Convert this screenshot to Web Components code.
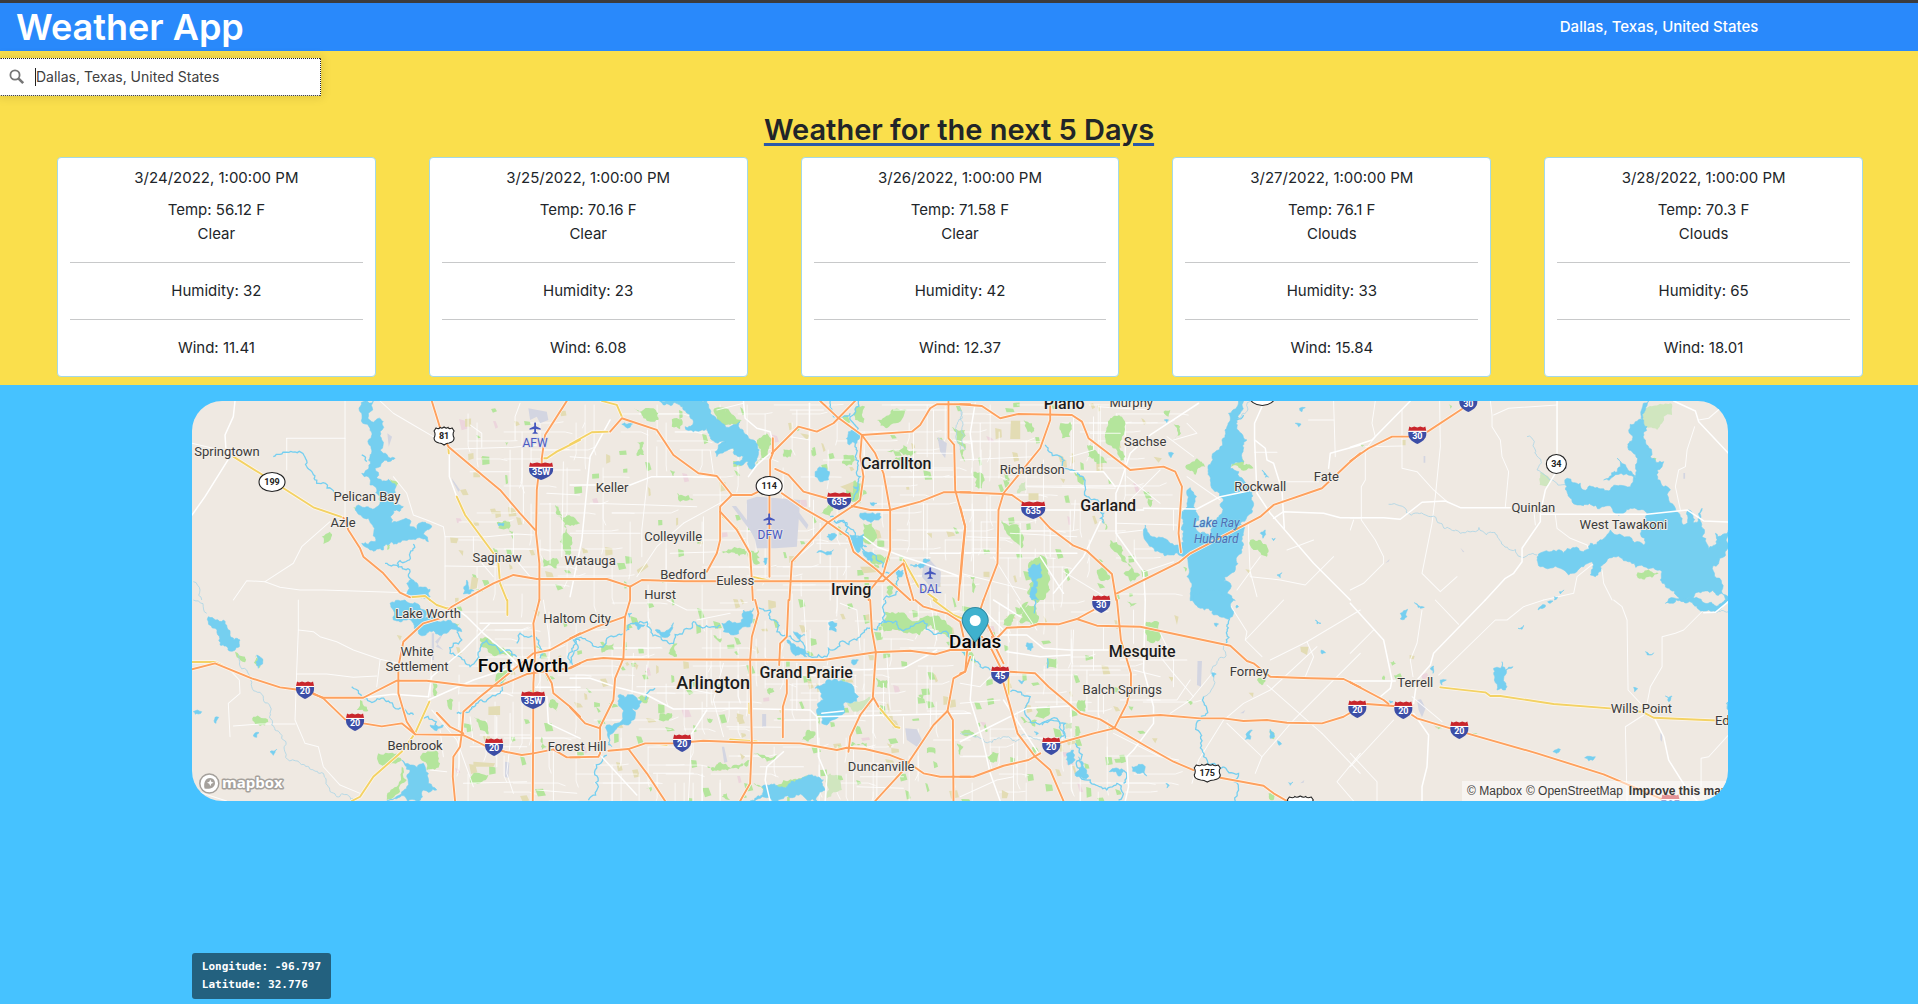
<!DOCTYPE html>
<html lang="en">
<head>
<meta charset="utf-8">
<meta name="viewport" content="width=device-width, initial-scale=1">
<title>Weather App</title>
<style>
  html, body { margin: 0; }
  body { font: 400 16px/24px Inter, "Liberation Sans", sans-serif; color: #212529; background: #46c2ff; }
</style>
</head>
<body>
<weather-app>
  <app-header slot="header" place="Dallas, Texas, United States">Weather App</app-header>
  <place-search slot="search" value="Dallas, Texas, United States"></place-search>
  <span slot="title">Weather for the next 5 Days</span>
  <forecast-card when="3/24/2022, 1:00:00 PM" temp="56.12" sky="Clear" humidity="32" wind="11.41"></forecast-card>
  <forecast-card when="3/25/2022, 1:00:00 PM" temp="70.16" sky="Clear" humidity="23" wind="6.08"></forecast-card>
  <forecast-card when="3/26/2022, 1:00:00 PM" temp="71.58" sky="Clear" humidity="42" wind="12.37"></forecast-card>
  <forecast-card when="3/27/2022, 1:00:00 PM" temp="76.1" sky="Clouds" humidity="33" wind="15.84"></forecast-card>
  <forecast-card when="3/28/2022, 1:00:00 PM" temp="70.3" sky="Clouds" humidity="65" wind="18.01"></forecast-card>
  <city-map slot="map"></city-map>
  <coord-readout slot="coords" longitude="-96.797" latitude="32.776"></coord-readout>
</weather-app>

<script>
function define(name, render) {
  customElements.define(name, class extends HTMLElement {
    connectedCallback() {
      if (this.shadowRoot) return;
      this.attachShadow({ mode: "open" }).innerHTML = render(this);
    }
  });
}

define("weather-app", () => `
<style>
  :host { display: flex; flex-direction: column; min-height: 100vh; box-sizing: border-box; border-top: 3px solid #3b3b3d; }
  .forecast { background: #fadf4c; padding: 7px 0 8px; }
  h2 { margin: 15px 0 8px; font-size: 29px; line-height: 38px; font-weight: 600; text-align: center;
       text-decoration: underline 3px #2a59a8; text-underline-offset: 3px; }
  .days { display: grid; grid-template-columns: repeat(5, 1fr); gap: 53px; padding: 0 55px 0 57px; }
  .map { width: calc(80% + 2px); margin: 16px 0 0 10%; }
  .coords { margin: auto 0 5px 10%; padding-top: 16px; }
</style>
<slot name="header"></slot>
<main class="forecast">
  <slot name="search"></slot>
  <h2><slot name="title"></slot></h2>
  <div class="days"><slot></slot></div>
</main>
<div class="map"><slot name="map"></slot></div>
<div class="coords"><slot name="coords"></slot></div>`);

define("app-header", el => `
<style>
  :host { display: grid; grid-template-columns: 73fr 27fr; align-items: center; background: #2989fb; color: #fff; }
  h1 { margin: 0; padding-left: 16px; font-size: 36px; line-height: 48px; font-weight: 600; }
  p { margin: 0; text-align: center; font-size: 15px; font-weight: 500; }
</style>
<h1><slot></slot></h1><p>${el.getAttribute("place")}</p>`);

define("place-search", el => `
<style>
  :host { display: block; width: 321px; }
  form { display: flex; align-items: center; height: 38px; box-sizing: border-box; padding-left: 9px;
         background: #fff; border: 1px dotted #222; border-left: 0; border-radius: 1px;
         box-shadow: 0 0 10px 2px rgba(0,0,0,.1); }
  svg { width: 16px; height: 16px; flex: none; margin-right: 10px; }
  i { width: 1px; height: 18px; background: #222; flex: none; }
  input { flex: 1; min-width: 0; border: 0; outline: 0; padding: 0; background: none; color: #404040;
          font: 400 14px/20px Inter, "Liberation Sans", sans-serif; }
</style>
<form>
  <svg viewBox="0 0 16 16" fill="none" stroke="#757575" aria-hidden="true"><ellipse cx="6" cy="6" rx="4.6" ry="4.7" stroke-width="1.8"/><path d="M9.6 9.6l4.6 4.6" stroke-width="2.6"/></svg>
  <i></i><input type="text" aria-label="Search" value="${el.getAttribute("value")}">
</form>`);

define("forecast-card", el => {
  const a = n => el.getAttribute(n);
  return `
<style>
  :host { display: block; box-sizing: border-box; padding: 8px 12px 0; background: #fff; border: 1px solid #a3d9e8;
          border-radius: 4px; text-align: center; font-size: 15px; line-height: 24px; }
  h3 { margin: 0 0 8px; font: inherit; }
  p { margin: 0 0 16px; }
  hr { height: 1px; margin: 16px 0; border: 0; background: #c8c9ca; }
</style>
<h3>${a("when")}</h3>
<p>Temp: ${a("temp")} F<br>${a("sky")}</p><hr>
<p>Humidity: ${a("humidity")}</p><hr>
<p>Wind: ${a("wind")}</p>`;
});

define("coord-readout", el => `
<style>
  :host { display: inline-block; vertical-align: top; padding: 5px 10px; border-radius: 3px; background: #23617f; color: #fff;
          font: 700 11px/18px "DejaVu Sans Mono", monospace; }
</style>
<div>Longitude: ${el.getAttribute("longitude")}</div>
<div>Latitude: ${el.getAttribute("latitude")}</div>`);

/* Map data: one sheet per rectangle, three units to a pixel, origin at (x, y). */
const SHEETS = [
{ x: 180, y: 390,
  water: `555,33 580,33 578,60 565,70 575,95 610,95 600,125 605,150 600,180 645,205 610,215 585,235 590,262 625,268 648,290 635,320 650,345 670,350 640,362 635,400 665,390 690,390 690,410 710,420 722,398 755,408 730,432 745,455 700,448 650,462 618,462 610,480 570,480 545,460 585,455 582,420 565,385 530,365 535,345 560,350 595,348 600,320 585,290 570,285 565,260 545,250 560,240 570,200 575,180 565,160 570,115 548,100 545,70
680,580 700,570 715,592 750,598 750,620 680,610
860,570 866,600 882,602 850,612
955,400 972,400 970,408 955,407`,
  river: `280,200 320,187 345,186 380,212 398,250 410,280 455,298 475,310
700,462 690,500 660,512 655,530 615,520
655,530 690,545 700,575
545,195 560,215`,
  stream: `40,575 60,600 65,630`,
  green: `425,440 450,425 445,455 430,462
630,268 655,280 640,310 632,300
950,397 990,397 988,415 955,415
975,157 985,157 980,167
520,352 540,352 530,364
618,462 630,465 622,480
1125,345 1145,380 1180,395 1150,480 1170,500 1160,420
1090,500 1130,505 1130,535 1090,530
980,410 1000,440 1000,450
1130,380 1200,400 1180,380`,
  tan: `810,442 835,445 830,460 812,458
875,560 895,565 890,595 870,600
880,246 900,248 900,262 880,262
835,480 850,482 848,498`,
  apt: `1045,55 1100,65 1105,90 1080,100 1070,80 1050,90
815,265 840,300 835,305 818,275
622,130 636,140 626,170`,
  yellow: `160,200 240,250 400,352 490,383
805,175 806,190
830,320 855,375 940,490 955,520 960,580 980,630
1085,205 1100,205 1130,185 1200,150
690,622 735,618 750,630`,
  orange: `755,33 785,130 805,170 870,225 960,300 1020,370 1065,420
1160,33 1095,135 1085,205 1085,225
1075,260 1070,300 1068,430 1078,520 1078,630
490,383 505,420 540,475 550,500 610,550 660,608 690,622
850,630 940,580 1000,555 1070,567 1200,567`,
  white: `165,33 160,80 135,135 138,180 150,200 75,320 36,375
808,180 808,260 830,320`,
  minor: `36,160 130,182
495,33 495,383
320,145 495,145
320,145 320,240
600,33 640,70 700,105 785,155
450,395 365,470 340,520 255,575 200,572 160,630
255,575 300,592 360,600 430,600 680,608
640,260 680,310 700,375 740,390 790,410 795,440 795,630
808,178 1000,172 1070,165
1020,40 1005,80 1005,150
990,180 990,370
870,105 905,130 905,172
870,245 990,245
795,440 920,440 1010,432 1060,435
1030,290 1030,400
1090,240 1200,240
1100,310 1200,315
1080,480 1200,480
1110,340 1110,520
1150,215 1145,500
880,440 880,490 940,560
795,528 950,530
1000,430 1000,500 1050,560` },
{ x: 180, y: 600,
  water: `85,50 130,60 150,105 180,120 178,140 120,135 105,85 85,65
230,165 248,185 235,205
630,10 680,5 720,25 740,35 735,55 775,65 830,75 845,95 800,100 760,92 720,105 715,95 700,70 680,60 640,60 640,30
665,480 690,495 730,490 745,520 745,550 770,570 730,570 710,603 620,603 665,575 680,560 680,530 690,510
40,335 65,335 55,342
105,352 116,352 108,370
220,408 237,398 230,412
270,455 290,448 280,466
750,375 790,375 770,392`,
  river: `830,95 845,120 820,130 810,160 840,170 870,200 890,180 900,145 920,120 950,140 960,160 1010,170
1010,130 1020,100 1060,110 1080,140 1080,175
960,240 960,280 900,300 870,330 830,340
515,260 560,295 640,320 700,345
730,355 770,380
1180,200 1190,150 1180,120 1200,122`,
  stream: `40,0 80,40
175,165 200,210 215,260 270,340 275,375 300,400 360,490 430,520 445,560 470,590 530,600`,
  green: `165,155 195,170 195,187 170,172
225,165 250,180 238,205
220,350 265,365 240,378 225,372
540,300 560,320 565,332 530,330
595,460 625,460 665,480 640,490 597,492
665,500 680,540 660,575 620,600 650,560
720,470 770,450 780,490 740,510
900,115 1000,160 1000,175 930,160 900,140
950,200 985,210 970,255 945,240
800,300 820,300 815,330
760,240 772,245 770,290 760,285
790,60 840,70 830,80
880,350 900,360 925,405 900,390
880,520 925,525 900,550 870,550
1085,410 1100,440 1085,450
1060,130 1080,150 1082,170
1110,300 1135,310 1130,335 1112,325`,
  tan: `925,320 960,318 960,345 925,345
880,485 945,490 940,500 880,500
650,105 665,108 660,122
1060,30 1080,35 1075,50`,
  apt: `755,100 762,100 762,180 755,180
765,125 790,100 768,140 790,150
975,485 988,487 985,535 975,530`,
  yellow: `36,186 105,186 125,195
750,0 770,15 800,25 820,25
748,305 705,400 665,455 580,530 540,590 515,603
982,0 982,45`,
  orange: `36,208 105,190 215,235 300,262 360,270
400,282 430,293 550,293 650,242 740,242 860,257 960,257 1040,222 1085,215 1170,205 1200,190
400,280 430,295 495,358 550,370 605,379 665,370 705,403 850,405 915,437 975,455 1025,465 1060,460 1120,448 1160,472 1200,472
850,0 815,20 780,55 730,70 670,125 655,200 655,280 680,365 705,403
1078,0 1060,70 1065,160 1060,250 1058,603
1200,100 1110,150 1060,160 950,250 900,290 850,335 845,400 840,440 820,470 818,530 825,603
1090,205 1115,250 1120,280 1170,320 1200,350
770,338 810,380 850,400`,
  white: `550,293 640,283 745,290
745,300 880,240 1000,200
930,70 850,150 755,230 745,290
820,20 860,50 910,100 970,150 1010,190
900,70 1060,70
1060,262 1200,262
1100,290 1105,370 1200,415`,
  minor: `355,0 355,90 350,210 345,360 375,430 415,440 430,500 480,555 540,580
355,90 400,95 420,110 470,125 520,150 600,178 655,190
350,222 440,222 520,232 590,228
590,260 600,180
140,200 178,240 180,280 145,310 150,410
160,378 240,372 345,372
750,290 755,170
990,340 990,430 980,520 1000,580
950,350 950,500
870,440 1040,440
850,550 1040,545
1090,0 1110,130 1105,200
1120,450 1120,600
1070,570 1190,580
870,350 880,430
900,405 1050,405
755,330 830,420 880,560
750,510 800,515
36,570 140,603
780,390 790,470` },
{ x: 570, y: 390,
  water: `268,33 410,33 425,75 445,90 455,100 510,95 520,125 550,150 562,170 560,210 545,238 535,215 490,220 520,200 490,175 440,200 435,185 465,155 425,150 410,115 370,125 345,110 370,95 340,60 280,45
735,245 755,233 778,245 775,270 750,275 735,260
835,125 870,130 860,160 848,155 838,165
1020,525 1060,508 1080,510 1050,535
155,103 190,100 180,112
870,370 930,370 925,390 880,390
900,338 920,340 910,348
840,435 880,432 890,470 860,490 845,460
880,480 910,490 905,515 885,500
980,540 1000,540 995,560 980,555
770,440 800,435 790,448
740,488 790,480 770,495
582,505 592,505 585,525
850,290 865,290 860,310`,
  river: `865,33 840,80 860,130 855,200 870,260 850,330
780,33 790,80 840,70
780,380 850,440 880,490 940,520 990,550 940,630
800,400 850,420 850,460`,
  stream: `1165,50 1170,180`,
  green: `560,150 590,130 605,150 590,200 560,225
880,400 905,400 905,460 885,460
545,490 565,480 570,520 550,520
640,178 662,178 662,200 640,200
190,55 250,55 265,90 220,85
305,88 335,88 330,118 305,110
430,60 490,75 515,90 480,105 450,100
490,175 520,185 500,195
200,155 220,155 222,195 200,198
300,240 315,245 310,260
320,310 355,315 370,330 330,335
820,195 850,195 845,225 815,220
855,270 880,280 870,340 840,330
775,345 785,345 780,378 750,370
970,210 1010,200 1010,240 980,235
950,185 1000,165 1040,185 1000,195
920,90 1010,60 1000,80 950,115
1145,110 1185,120 1185,180 1170,165
455,485 530,485 525,495 460,490
855,50 885,50 880,100 855,90
900,490 960,500 950,520 900,515
950,590 990,550 960,620`,
  tan: `810,290 850,275 848,310
870,530 920,530 930,545 880,550
690,130 720,135 710,150
1070,430 1085,430 1085,445
200,540 230,520 235,530 205,552`,
  apt: `530,330 560,320 690,330 680,470 615,475 560,475 555,450 530,400
485,348 498,348 560,430 550,435
640,330 655,325 715,405 710,418
1060,520 1075,505 1112,545 1110,590 1080,590 1055,560
1102,140 1130,160 1125,205 1110,185`,
  yellow: `95,33 140,45 155,80
0,163 65,127 120,125
452,375 500,415 538,490 545,560 600,572
1000,510 1045,590 1100,630`,
  orange: `120,125 155,85 260,120 310,195 385,250 440,258 485,315 545,315 575,300
485,315 450,350 450,450 440,490 410,545
450,365 500,420 540,490 545,570 548,630
608,145 608,190 600,210 600,260
598,310 598,560
605,190 685,110 740,125 790,100 855,33
750,33 800,80 875,135 1025,125 1050,105 1080,55 1100,43 1200,43
875,135 915,190 940,250 960,360 960,480 940,550 900,600 895,630
875,135 870,200 880,260 870,330 845,350
615,237 655,255 700,305 770,325
845,348 900,360 960,360 1050,335 1120,307 1200,307
845,350 770,400 665,515 658,630
635,310 700,355 770,395 835,440 850,485 920,540 1020,630
0,567 110,567 180,590 215,570 340,574 940,574
180,590 180,630
940,572 1000,520 1010,560 1030,630
1135,33 1135,145 1152,165 1155,300 1185,410 1175,500 1165,630`,
  white: `520,33 525,85 560,115 600,125 605,145
535,260 560,225 600,190
0,285 180,285 245,260 350,260 440,262
120,90 60,200 35,450 0,620
718,40 718,350
880,440 920,470 1000,500 1060,520 1170,560
1080,490 1200,490`,
  minor: `232,120 232,270 215,420 215,500
340,400 485,320
200,560 260,470 340,400
0,200 60,205
60,340 240,345 380,350
0,430 210,430
330,180 420,180 430,250
440,60 520,40
660,60 760,60
680,60 680,110
760,210 840,210
970,60 1130,60
1030,130 1030,320
1040,190 1150,190
980,420 1180,420
1060,340 1060,480
730,330 730,460 660,520
740,460 840,460
750,400 750,520
400,380 400,520
300,490 450,485
260,170 260,260
880,240 1150,240
1090,60 1090,330
1150,150 1200,160
660,140 720,150
620,530 840,530
780,500 780,630
560,600 900,600` },
{ x: 570, y: 600,
  water: `540,603 570,590 575,560 650,560 720,525 760,540 765,570 740,603
735,265 770,240 820,245 865,290 820,310 815,345 770,375 755,370 760,300 750,275
145,285 215,305 185,325 195,350 170,375 135,390 125,440 115,435 110,375 140,370 150,320
455,70 500,70 520,30 550,25 540,80 490,105 460,95
255,90 310,68 300,105 270,105
650,120 690,145 710,170 685,165
670,95 705,105 690,120
775,68 800,70 798,95 778,90
845,180 865,180 850,195
170,40 185,40 178,52
195,70 225,75 205,90`,
  river: `0,190 15,120 60,125 90,140 130,110 165,95 175,75 240,85 310,130 340,95 370,65 450,75
560,20 600,30 620,95 670,120 720,170 770,170 775,145 810,125 860,120 920,90 940,30 945,0
110,465 75,510 85,560 55,600
225,300 240,270 255,265
940,60 1060,62 1140,115`,
  green: `550,550 640,540 720,525 700,545 640,565 580,570
945,35 960,40 1080,50 1145,95 1150,115 1080,75 930,75
915,235 950,240 950,265 920,260
295,160 305,140 322,130 320,170
740,345 760,340 750,375
710,390 735,395 715,425 695,420
90,140 130,130 130,150 95,158
200,295 235,290 230,310
270,340 305,340 295,362 265,360
410,500 490,505 540,480 530,500 450,512
550,460 600,475 625,460 590,485
430,105 455,115 450,128
845,425 890,430 890,440 840,438
1070,445 1095,445 1095,462 1070,460
225,560 245,562 240,575
410,355 428,358 420,370
1160,430 1180,440 1170,465
590,270 610,265 600,285
470,580 455,590 480,600
1045,285 1060,285 1055,300`,
  lgreen: `780,520 810,540 815,570 770,595 765,545
830,310 900,290 900,320 850,335`,
  tan: `500,340 520,345 515,370 502,365
950,430 965,435 960,445
190,190 205,195 200,210
510,460 525,470 515,480`,
  apt: `1005,385 1040,388 1060,430 1040,440 1010,420
750,255 800,240 790,270 760,270
576,342 588,342 588,380 576,380
455,440 462,440 472,485 462,488`,
  yellow: `925,320 975,380 988,383
1090,0 1150,45 1175,55
538,310 538,340
245,430 290,434
480,418 560,424`,
  orange: `180,0 165,50 80,80 0,115
165,50 160,175 135,235 130,300 90,380 90,460 85,470 0,472
0,322 45,370 90,385
0,203 50,180 100,174 160,178 760,180 915,157 1020,152 1095,163 1140,150 1200,150
555,0 565,40 545,110 540,180 545,430 540,550 510,603
655,0 650,110 630,130 627,195
650,240 650,280 638,320 638,412
900,0 905,90 917,157 908,290 925,320
908,295 870,345 840,410 835,455
115,452 175,447 225,430 310,430 400,422 545,428 690,430 800,450 830,443 885,447 960,465 1010,485 1060,520 1110,530 1200,530
175,447 230,520 285,603
915,603 1000,510 1090,375 1132,333 1150,235 1185,215 1200,170
1132,333 1148,360 1150,603
1035,0 1060,20 1130,40 1170,65 1180,110`,
  white: `0,235 60,235 140,262 230,285 310,327 500,325 720,330 740,350 1200,340
95,470 200,585
365,400 410,330
740,350 745,470 770,530 765,603
600,603 585,540 590,500 640,455
755,340 820,333
850,210 1000,205 1100,150`,
  minor: `410,60 410,320
190,160 185,300
460,190 430,300 460,410
200,260 320,260 420,280
365,400 355,600
850,450 850,600
850,490 1000,490
660,300 740,300
680,190 680,330
230,195 225,280
0,270 130,270
470,380 640,382
940,250 940,350
1000,350 1000,430
1040,210 1040,340
1085,200 1080,380
870,530 1000,530
860,560 1000,565
920,490 920,600
250,520 370,520
450,540 450,600
570,500 700,500
760,200 900,210
1090,420 1200,420
290,0 350,30 520,30
380,60 480,40
700,0 710,150
810,10 860,30 870,150
950,165 960,330
1080,0 1100,120` },
{ x: 960, y: 390,
  water: `835,33 850,33 835,75 830,110 860,150 845,190 850,215 810,235 850,270 865,300 880,340 860,380 840,400 845,440 850,465 830,500 825,540 790,575 810,580 800,610 825,632 690,632 690,575 680,560 685,530 670,500 630,495 575,470 550,425 555,405 590,445 630,460 655,465 675,460 670,400 680,340 690,293 700,350 710,370 705,410 720,430 760,450 760,400 785,370 790,330 760,300 750,270 755,200 785,150 800,110 805,70
625,188 640,190 632,203
905,240 925,262 915,262
215,525 240,520 245,560 235,630 215,630 220,590
1018,55 1035,53 1025,65
1005,100 1022,102 1015,110
950,555 965,548 960,563
900,430 915,420 908,445
935,445 945,445 940,452
612,90 625,90 620,98`,
  river: `255,165 290,195 330,240 375,290 380,320 430,370 430,400
830,90 850,75`,
  stream: `840,90 870,33
0,60 15,180`,
  green: `675,230 710,205 735,230 705,255
810,230 845,205 850,225 880,235 850,242
450,85 485,80 485,140 495,200 480,215 445,165
635,98 660,110 662,130 645,150
125,390 175,405 180,480 150,440
205,520 240,495 260,515 270,600 250,630 215,630 220,560
410,540 440,530 450,565 415,565
490,550 515,530 540,555 510,575
450,450 495,510 515,530 480,500
300,100 330,95 330,140 305,145
190,90 215,100 215,130
380,165 410,185 440,220 410,222
340,245 375,265 370,285
40,245 65,250 65,295 45,290
560,320 578,330 570,352
870,450 925,480 920,500 880,480
30,560 45,560 40,610
425,385 442,410 435,420
668,530 680,535 675,545
0,180 15,180 15,215
610,65 630,60 625,80`,
  lgreen: `170,310 195,275 198,300`,
  tan: `152,92 180,92 180,147 150,147
205,310 235,310 235,330 205,330
580,200 605,205 595,218
70,545 88,545 88,562 70,560
855,538 870,540 868,552
300,265 315,268 310,280`,
  orange: `0,43 65,48 120,85 175,72 335,75 365,95 385,145 510,240 610,230 645,245 665,290 655,430 662,487
270,45 270,90 240,175 130,310 115,360 112,520 70,630
0,307 130,312 155,315 190,340
240,382 270,415 340,467 380,483 455,552 468,630
470,610 530,580 655,518 690,490 900,380 940,345 1085,295 1165,220 1200,190
0,350 15,410 0,580`,
  white: `715,40 570,135 510,190 480,280 467,310 467,430 550,545 555,630
330,245 430,245 465,290
550,355 710,357 780,320 865,303
905,50 883,100 883,150 915,175 920,210 940,220 965,300 972,415
883,150 890,310 930,370 1060,520 1170,630
940,385 970,365 1090,370 1140,383 1200,383
45,40 30,130 40,210
0,360 550,360
0,488 350,490
420,395 370,500 280,610
240,500 310,610
1105,235 1110,190 1200,165`,
  minor: `0,210 220,200
0,155 250,155
60,100 60,300
200,290 465,295
865,400 865,440 870,560 960,570 1035,585 1120,500
970,275 1075,275
1120,33 1125,200
1045,90 1120,90
883,187 950,187
900,500 870,540
680,260 780,330
500,260 600,340
600,240 510,330
640,150 710,130 680,100
620,140 700,200
180,400 180,560
270,420 270,500
340,80 340,240
400,80 400,180 330,200
150,430 350,440
20,440 150,445
40,360 40,550
80,320 80,480
250,210 250,330
330,360 330,470
470,400 650,405
640,360 640,420
470,430 550,420
345,330 340,420
100,500 180,630
0,550 200,600
310,545 450,630
415,50 570,60
420,50 420,240
390,130 480,130
550,545 640,515
980,480 1060,450
830,600 870,545 890,620` },
{ x: 960, y: 600,
  water: `700,0 820,0 820,40 808,57 760,45 720,25
762,70 775,72 768,80
1065,60 1082,70 1070,72
1083,150 1096,158 1085,162
755,218 768,222 760,232
860,398 876,390 870,418 855,418
930,388 943,410 930,415
952,422 964,432 956,436
320,460 340,450 345,480 325,495
345,520 355,470 370,490 385,530 350,530
447,515 490,510 480,528
515,500 555,500 560,528 530,520
985,548 998,546 990,556
617,550 627,556 620,564
200,128 216,130 212,152 202,148
175,240 192,242 185,252
222,395 235,400 228,405
830,15 835,20 828,24`,
  river: `0,150 60,200 90,210
150,275 210,290 200,350 230,370 290,355 315,370 315,415
245,375 300,375 300,415
345,430 350,500 390,540 470,550 475,600
490,550 490,510
808,57 798,130
730,290 720,360 730,470 780,505 835,520 835,570 825,603
225,0 222,40
262,175 262,205`,
  stream: `798,130 770,190 760,240 730,290
0,400 60,415 130,410 200,405 240,420`,
  green: `558,65 597,68 597,122 560,122
130,75 205,5 200,15 145,80
180,70 225,15 235,60 225,75
262,175 290,175 290,205 262,205
355,300 375,300 375,335 355,330
230,320 270,318 270,340 225,350
80,470 120,455 110,485 90,485
890,240 900,233 916,240 905,256
10,150 45,180 50,200 20,180
180,350 230,360 225,380 190,370
925,580 945,582 940,600 930,600
680,300 697,305 690,315
0,395 50,405 45,412
500,5 530,10 510,22
505,318 520,320 515,332
930,390 943,400 940,418`,
  lgreen: `315,368 335,368 335,385 315,385`,
  tan: `125,570 145,580 140,595 125,595
1020,140 1045,140 1040,165 1022,155
642,45 655,50 650,75
575,415 592,415 585,430
865,278 880,278 878,292
625,230 640,232 635,245`,
  apt: `712,183 725,183 722,260 710,255
840,340 855,330 850,340
1020,550 1032,540 1030,548`,
  pink: `80,80 100,78 105,95 82,95
60,365 78,368 70,380`,
  yellow: `145,230 145,285`,
  orange: `105,120 140,83 210,80 235,72 295,73 350,57 400,30
350,57 410,77 540,80 810,137 860,183 880,190 930,230 1050,235 1150,237 1200,262
470,0 482,120 512,220 512,260 500,310 462,385 400,400 300,428
150,215 225,220 265,260 360,340 420,358 460,382 560,440 640,485 700,510
780,533 910,557 940,580 980,603
240,460 205,480 130,497 40,530 0,530
65,110 95,150 120,200
95,110 105,140 130,190
130,250 150,320 172,400 225,470 270,510 310,603
480,352 600,345 720,355 790,355 850,363 920,360 980,368 1085,370 1150,350 1175,335
0,220 15,215 20,160 25,130
70,0 60,30 105,120`,
  white: `110,105 200,105 250,145 330,150 450,150
140,155 240,170 330,165
555,0 550,210 580,320 580,370 520,450 500,470 505,560 495,603
130,300 235,460
0,425 100,375 200,325 330,318
40,170 30,300 70,430 90,520 120,603
100,0 180,50
60,20 130,90`,
  minor: `250,210 480,210
290,70 290,315
340,90 335,210 330,350
630,340 690,300 760,215
480,300 600,300
600,170 640,220 700,290
1070,140 930,270 850,310 790,360 715,480 695,550
800,370 905,470 1000,360 1110,250 1200,160
1200,460 1130,545 1180,603
1085,400 1200,520
905,470 885,520
855,120 970,0
800,0 860,95 855,120 905,170
920,255 1085,400
1040,125 1060,170 1035,230
930,180 1040,125 1200,30
480,180 680,180
520,30 520,130
430,80 430,150
600,100 640,180 640,260
520,210 600,230
380,210 380,330
430,270 430,340
400,150 400,210
0,60 60,90
0,250 60,260 100,220
0,310 120,300
0,470 80,470
160,430 160,603
0,590 110,540 160,530
170,0 230,90
560,300 650,300 690,240
460,400 600,470 655,480` },
{ x: 1350, y: 390,
  water: `895,33 880,90 890,110 885,150 900,200 940,215 920,240 940,290 960,300 955,330 975,355 990,380 1000,405 1015,360 1030,400 1045,370 1055,355 1055,440 1075,480 1100,450 1134,420 1140,632 992,632 960,600 930,570 935,545 880,530 840,515 790,500 750,530 735,560 720,555 725,515 700,530 655,555 630,535 570,530 560,510 580,485 640,490 700,485 720,460 755,450 780,420 800,435 830,440 880,465 870,430 885,400 885,365 840,355 760,350 690,345 660,325 650,290 650,265 690,280 700,300 780,300 840,290 850,260 820,255 760,270 810,230 800,205 830,235 855,265 835,180 835,120 855,95 875,90 885,60
627,605 641,600 630,612
612,620 622,622 612,630
1095,430 1105,450 1100,480`,
  stream: `115,343 170,370 220,373 270,400 330,430 440,435 510,500 560,495
530,140 555,180 560,240 600,270 650,290`,
  green: `895,200 918,205 905,230
862,547 905,545 925,550 905,563 862,563
295,42 305,48 300,56
30,165 42,165 36,170`,
  lgreen: `885,55 965,42 965,75 940,80 935,100 920,120 885,115 875,90
568,248 600,270 590,287 568,285`,
  tan: `155,150 166,150 166,166 155,166`,
  apt: `220,198 225,198 225,218 220,218
330,473 342,485 338,487
105,520 118,507 116,514
999,249 1004,249 1004,266 999,266
645,212 650,212 650,238 645,238`,
  orange: `0,213 55,175 125,140 175,140
232,125 335,57`,
  white: `620,33 620,190
615,250 585,300 570,370 570,395 515,475 515,515 490,550 465,565 405,630
570,373 890,373 1010,360 1060,393 1134,396
0,383 100,383 150,388 215,337 285,333 330,353 480,353
180,33 65,150 0,172
970,33 1035,63 1045,95 1134,190`,
  minor: `75,33 65,100 75,140 45,180 45,270 33,290 33,390 75,450 100,500 100,520 40,580 0,600
45,170 155,168
155,60 155,235 200,245 250,300 290,335
268,33 270,170 255,320 245,400 215,550 270,605 320,560
420,33 425,75 425,110 450,150 455,200 475,245 465,350
430,75 475,55 620,45
1033,110 1010,180 1005,230 985,240 975,290 990,360
1045,90 1075,85 1110,55
615,375 620,415 660,445 710,465 730,515 755,540 760,580 785,630
730,520 680,560 670,610 580,630
550,355 555,405
10,390 0,420` },
{ x: 1350, y: 600,
  water: `945,10 990,0 1134,0 1090,33 1060,33 1030,15 1000,5
430,205 450,205 455,185 465,210 488,200 465,270 440,270 432,240
150,40 172,28 170,50 150,57
192,8 222,22 210,25
563,30 585,15 570,25
592,5 608,3 600,10
503,85 520,76 515,88
270,240 288,240 275,255
240,205 250,198 248,220
885,155 910,158 890,164
850,262 862,266 853,275
945,288 965,288 955,305
608,455 630,448 618,460
703,473 735,470 715,482
1128,310 1134,305 1134,330
117,302 128,305 120,309`,
  stream: `1095,37 1134,35`,
  green: `120,187 130,182 137,190 125,197
95,238 101,226 103,240
132,225 150,220 155,235 135,235
365,398 382,400 375,404
260,380 275,385 265,388`,
  tan: `178,165 193,168 190,178 178,176
250,375 265,382 258,385`,
  pink: `212,225 230,218 235,232 218,240`,
  apt: `200,300 212,298 226,325 215,352 205,330
930,400 935,400 935,425 930,420`,
  yellow: `270,262 405,277 420,288 450,288 610,312 780,325 870,335
885,340 910,353 1140,363`,
  orange: `0,247 100,300 115,312
50,312 130,318
185,345 200,355 300,385 350,400 560,460 760,523 935,597`,
  white: `0,10 100,120 125,240 120,265 90,290
0,243 135,243
405,0 250,160 240,195 200,240 190,310
190,340 235,405 230,500 215,560 215,603
910,350 940,410 955,480 1005,560 1040,603
1060,38 1095,37 1134,5`,
  minor: `265,225 435,60 470,60 520,20 580,0
255,0 325,73
185,290 275,365
790,0 815,20 830,60 833,270 880,320
1060,30 1000,90 975,100 935,110 935,200 900,260 890,310
880,345 825,380 830,603
130,360 0,500
0,460 80,545 80,603
1134,405 1075,470 1052,475 1052,560
215,30 200,130 180,180 188,230
0,160 70,90` }
];

let seed = 7;
const rnd = () => (seed = (seed * 16807) % 2147483647) / 2147483647;

/* Splits each edge again and again, pushing the midpoints sideways, for a ragged shore. */
function ragged(pts, amount, close = true) {
  const out = [];
  const split = (a, b) => {
    const dx = b[0] - a[0], dy = b[1] - a[1];
    if (Math.hypot(dx, dy) < 9) { out.push(a); return; }
    const k = (rnd() - .5) * amount, m = [(a[0] + b[0]) / 2 - dy * k, (a[1] + b[1]) / 2 + dx * k];
    split(a, m); split(m, b);
  };
  const n = pts.length;
  for (let i = 0; i < (close ? n : n - 1); i++) split(pts[i], pts[(i + 1) % n]);
  if (!close) out.push(pts[n - 1]);
  return out;
}

function layer(key, cls, rough, close) {
  return SHEETS.map(s => (s[key] || "").split("\n").filter(Boolean).map(line => {
    let p = line.trim().split(/\s+/).map(v => v.split(",").map(Number));
    if (rough) p = ragged(p, rough, close);
    return `<path class="${cls}" d="M${p.map(q => (s.x + q[0] / 3).toFixed(1) + " " + (s.y + q[1] / 3).toFixed(1)).join("L")}${close ? "Z" : ""}"/>`;
  }).join("")).join("");
}

/* Small parks and side streets of the built-up area. */
function suburbs() {
  let parks = "", streets = "";
  const spot = () => [455 + rnd() * 690, 403 + rnd() * 396];
  for (let i = 0; i < 360; i++) {
    const [x, y] = spot(), w = 2 + rnd() * 6, h = 2 + rnd() * 6;
    const c = i % 14 == 0 ? "pink" : i % 3 == 0 ? "tan" : "green";
    parks += `<path class="${c}" d="M${x.toFixed()} ${y.toFixed()}l${w.toFixed(1)} ${(rnd() * 3 - 1).toFixed(1)} ${(rnd() * 3).toFixed(1)} ${h.toFixed(1)} ${(-w).toFixed(1)} ${(rnd() * 2).toFixed(1)}z"/>`;
  }
  for (let i = 0; i < 440; i++) {
    let [x, y] = spot(); const l = 15 + rnd() * 50;
    x = Math.round(x / 9) * 9; y = Math.round(y / 9) * 9;
    const k = (rnd() * 6 - 3).toFixed(1);
    streets += i % 2 ? `M${x} ${y}h${l.toFixed()}l7 ${k}` : `M${x} ${y}v${(l * .8).toFixed()}l${k} 6`;
  }
  return parks + `<path class="side" d="${streets}"/>`;
}

const interstate = (n, x, y) => {
  const w = n.length > 2 ? 12 : 9;
  return `<g transform="translate(${x} ${y})">
  <path d="M${-w} -3V-1C${-w} 4 ${-w / 2} 7 0 9C${w / 2} 7 ${w} 4 ${w} -1V-3Z" fill="#3c4ea6"/>
  <path d="M${-w} -4L${1 - w} -8.500L${3 - w} -7.500L${-w / 3} -8.500L0 -7.500L${w / 3} -8.500L${w - 3} -7.500L${w - 1} -8.500L${w} -4Z" fill="#c9262c"/>
  <path d="M${-w} -3.6H${w}" stroke="#fff"/><text class="sh" y="4" fill="#fff">${n}</text></g>`;
};
const oval = (n, x, y, rx) => `<g transform="translate(${x} ${y})"><ellipse rx="${rx}" ry="9.5" fill="#fff" stroke="#222" stroke-width="1.1"/><text class="sh" y="3" fill="#222">${n}</text></g>`;
const us = (n, x, y, w) => `<g transform="translate(${x} ${y})"><path d="M${-w + 2} -8Q${-w / 2} -6.5 ${-w / 2 + 1} -8.5Q${-w / 4} -7 0 -9Q${w / 4} -7 ${w / 2 - 1} -8.5Q${w / 2} -6.5 ${w - 2} -8L${w} -5Q${w - 2} -2 ${w} 2Q${w} 6 ${w / 2} 7Q${w / 4} 7 0 9Q${-w / 4} 7 ${-w / 2} 7Q${-w} 6 ${-w} 2Q${2 - w} -2 ${-w} -5Z" fill="#fff" stroke="#222" stroke-width="1.1"/><text class="sh" y="3" fill="#222">${n}</text></g>`;
const plane = (x, y) => `<path transform="translate(${x} ${y})" fill="#4657bd" d="M-.9 -5Q0 -6.600 .9 -5V-1.800L5.600 .6V1.800L.9 1V4L2.600 5V5.800H-2.600V5L-.9 4V1L-5.600 1.800V.6L-.9 -1.800Z"/>`;

const TOWNS = [["Springtown",227,452],["Pelican Bay",367,497],["Azle",343,523],["Saginaw",497,558],["Watauga",590,561],["Lake Worth",428,614],["White",417,652],["Settlement",417,667],["Benbrook",415,746],["Haltom City",577,619],["Forest Hill",577,747],["Keller",612,488],["Colleyville",673,537],["Bedford",683,575],["Euless",735,581],["Hurst",660,595],["Duncanville",881,767],["Murphy",1131,403],["Sachse",1145,442],["Richardson",1032,470],["Rockwall",1260,487],["Fate",1326,477],["Balch Springs",1122,690],["Forney",1249,672],["Quinlan",1533,508],["West Tawakoni",1623,525],["Terrell",1415,683],["Wills Point",1641,709],["Ed",1722,721]];
const CITIES = [["Carrollton",896,464],["Irving",851,590],["Grand Prairie",806,673],["Plano",1064,404],["Garland",1108,506],["Mesquite",1142,652]];

define("city-map", () => `
<style>
  :host { display: block; position: relative; height: 400px; border-radius: 30px; overflow: hidden; background: #efe9e2; }
  svg.chart { display: block; width: 100%; height: 100%; }
  .water, .river, .stream { stroke: #75cff0; stroke-width: 1; fill: none; }
  .water { fill: #75cff0; stroke-width: .6; }
  .river { stroke-width: 1.3; } .stream { stroke: #a9d4e6; stroke-width: .8; }
  .green { fill: #b4e59c; } .lgreen { fill: #d0e6bf; } .tan { fill: #e3dcb4; } .pink { fill: #ecd5dc; } .apt { fill: #d3d5e1; }
  .side, .minor, .white, .case, .orange, .yellow { fill: none; stroke: #fff; stroke-linejoin: round; stroke-linecap: round; }
  .side { stroke-width: .8; opacity: .9; } .minor { stroke-width: 1; opacity: .85; } .white { stroke-width: 1.5; }
  .case { stroke-width: 3.4; stroke: #fdf6ee; } .orange { stroke: #fea15e; stroke-width: 1.9; } .yellow { stroke: #f3d264; stroke-width: 1.9; }
  text { font-family: Roboto, "Liberation Sans", sans-serif; text-anchor: middle; }
  .town, .city, .big, .port, .lake { paint-order: stroke; stroke: #f4efe9; stroke-width: 2px; stroke-linejoin: round; }
  .town { font-size: 13px; fill: #3b3b3b; } .city { font-size: 16px; font-weight: 500; fill: #1c1c1c; }
  .big { font-size: 19px; font-weight: 500; fill: #050505; } .mid { font-size: 18px; }
  .port { font-size: 12px; fill: #4a59c0; stroke: #e2e2ea; }
  .lake { font-size: 12px; font-style: italic; fill: #4d70b4; stroke: #8fd6ef; stroke-width: 1px; }
  .sh { font-size: 9px; font-weight: 700; }
  .brand text { font: 700 15px "Open Sans", sans-serif; text-anchor: start; fill: #fff; stroke: #a5a19c; stroke-width: 3px; paint-order: stroke; stroke-linejoin: round; }
  footer { position: absolute; right: 0; bottom: 0; display: flex; gap: 4px; height: 20px; padding: 0 0 0 5px; box-sizing: border-box;
           background: rgba(255,255,255,.5); font: 12px/20px "Liberation Sans", sans-serif; white-space: nowrap; }
  footer a { color: #3b3a39; text-decoration: none; } footer a:last-child { font-weight: 700; margin-left: 2px; }
</style>
<svg class="chart" viewBox="192 401 1536 400" preserveAspectRatio="xMidYMid slice" role="img" aria-label="Map of Dallas and Fort Worth">
  ${suburbs()}
  ${layer("lgreen", "lgreen", .4, true)}${layer("green", "green", .5, true)}${layer("tan", "tan", 0, true)}${layer("pink", "pink", 0, true)}${layer("apt", "apt", 0, true)}
  ${layer("minor", "minor")}${layer("stream", "stream", .5, false)}${layer("river", "river", .6, false)}${layer("water", "water", .55, true)}
  ${layer("white", "white")}${layer("yellow", "case")}${layer("yellow", "yellow")}${layer("orange", "case")}${layer("orange", "orange")}
  ${[["20",305,690],["20",355,722],["20",494,747],["20",682,743],["20",1051,746],["20",1357,709],["20",1403,710],["20",1459,730],["30",1101,604],["30",1417,435],["30",1468,403],["45",1000,675],["35W",541,471],["35W",533,700],["635",839,501],["635",1033,510],["20",1670,803]].map(a => interstate(...a)).join("")}
  ${oval("199",272,482,13)}${oval("114",769,486,13)}${oval("34",1556,464,10)}${oval("",1262,396,13)}
  ${us("81",444,436,10)}${us("175",1207,773,13)}${us("",1300,805,13)}
  ${plane(535,428)}${plane(769,519)}${plane(930,573)}
  ${[["AFW",535,443],["DFW",770,535],["DAL",930,589]].map(t => `<text class="port" x="${t[1]}" y="${t[2] + 4}">${t[0]}</text>`).join("")}
  <text class="lake" x="1216" y="527">Lake Ray</text><text class="lake" x="1216" y="543">Hubbard</text>
  ${TOWNS.map(t => `<text class="town" x="${t[1]}" y="${t[2] + 4}">${t[0]}</text>`).join("")}
  ${CITIES.map(t => `<text class="city" x="${t[1]}" y="${t[2] + 5}">${t[0]}</text>`).join("")}
  <text class="big" x="523" y="672">Fort Worth</text><text class="city mid" x="713" y="689">Arlington</text><text class="big" x="975" y="648">Dallas</text>
  <g transform="translate(961.500 607)">
    <ellipse cx="13.500" cy="35" rx="10" ry="4.500" fill="#000" opacity=".08"/>
    <path fill="#3fb1ce" d="M27 13.500C27 19.070 20.250 27 14.750 34.500C14.020 35.500 12.980 35.500 12.250 34.500C6.750 27 0 19.220 0 13.500C0 6.040 6.040 0 13.500 0C20.960 0 27 6.040 27 13.500Z"/>
    <path fill="#000" opacity=".22" d="M13.500 0C6.040 0 0 6.040 0 13.500C0 19.220 6.750 27 12.250 34.500C13 35.540 14.020 35.500 14.750 34.500C20.250 27 27 19.070 27 13.500C27 6.040 20.960 0 13.500 0ZM13.500 1C20.410 1 26 6.590 26 13.500C26 18.720 19.500 26.400 13.940 33.900C13.740 34.180 13.600 34.320 13.500 34.440C13.400 34.320 13.260 34.180 13.060 33.900C7.500 26.400 1 18.540 1 13.500C1 6.590 6.590 1 13.500 1Z"/>
    <circle cx="13.500" cy="13.500" r="5.500" fill="#fff"/>
  </g>
  <g class="brand">
    <circle cx="209.300" cy="783.500" r="9.500" fill="#fff" stroke="#a5a19c" stroke-width="1.500"/>
    <path d="M204.500 788.500C203.300 783 205.300 778 210.200 778A5.200 5.200 0 0 1 215 783C215 788 209.500 789.500 204.500 788.500Z" fill="#a5a19c"/>
    <path d="M210.300 779.500l1 2.300 2.300 1-2.300 1-1 2.300-1-2.300-2.300-1 2.300-1z" fill="#fff"/>
    <text x="222" y="788">mapbox</text>
  </g>
</svg>
<footer><a href="#">© Mapbox</a><a href="#">© OpenStreetMap</a><a href="#">Improve this map</a></footer>`);
</script>
</body>
</html>
